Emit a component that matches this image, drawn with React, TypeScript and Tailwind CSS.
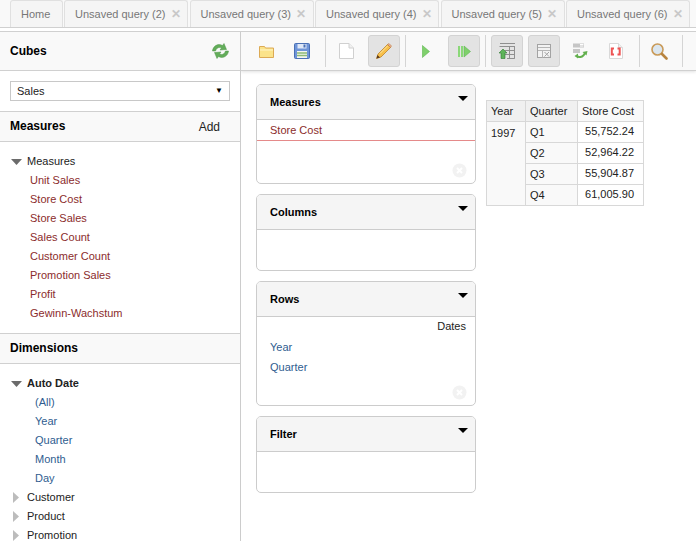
const font = "font-['Liberation_Sans',Arial,sans-serif]";

const tabs = ['Unsaved query (2)', 'Unsaved query (3)', 'Unsaved query (4)', 'Unsaved query (5)', 'Unsaved query (6)'];
const measures = ['Unit Sales', 'Store Cost', 'Store Sales', 'Sales Count', 'Customer Count', 'Promotion Sales', 'Profit', 'Gewinn-Wachstum'];
const levels = ['(All)', 'Year', 'Quarter', 'Month', 'Day'];
const cells = [['Q1', '55,752.24'], ['Q2', '52,964.22'], ['Q3', '55,904.87'], ['Q4', '61,005.90']];

function Open() {
  return (
    <svg width="11" height="6" viewBox="0 0 11 6" className="shrink-0">
      <path d="M0 0h11L5.500 6z" fill="#6b6b6b" />
    </svg>
  );
}

function Closed() {
  return (
    <svg width="6" height="11" viewBox="0 0 6 11" className="shrink-0">
      <path d="M0 0l6 5.500-6 5.500z" fill="#bcbcbc" />
    </svg>
  );
}

function Refresh() {
  return (
    <svg width="17" height="16" viewBox="0 0 17 16">
      <path d="M0.500 8C1 3 6 0 10.500 2.500L12 0.500 14.500 6.500 8 7 9.500 5C6.500 3.800 4.500 5 3.500 8z" fill="#63ad5a" stroke="#4f9447" strokeWidth="0.500" />
      <path d="M16.500 8C16 13 11 16 6.500 13.500L5 15.500 2.500 9.500 9 9 7.500 11C10.500 12.200 12.500 11 13.500 8z" fill="#63ad5a" stroke="#4f9447" strokeWidth="0.500" />
    </svg>
  );
}

function Folder() {
  return (
    <svg width="15" height="13" viewBox="0 0 15 13">
      <path d="M0.500 12.500V1.500h5l1 1.500h8v9.500z" fill="#fbe38a" stroke="#dcaa55" />
      <path d="M1 5h13" stroke="#fff6c8" />
    </svg>
  );
}

function Save() {
  return (
    <svg width="16" height="16" viewBox="0 0 16 16">
      <rect x="0.500" y="0.500" width="15" height="15" rx="1" fill="#6f95d8" stroke="#4a70b5" />
      <rect x="3.500" y="1" width="9" height="4.500" fill="#dfe8f7" />
      <rect x="9.500" y="1.500" width="2" height="3" fill="#4a70b5" />
      <rect x="3" y="8" width="10" height="7" fill="#f4f6f2" />
      <path d="M3 10h10M3 12.500h10" stroke="#8dbb75" strokeWidth="1.500" />
    </svg>
  );
}

function NewPage() {
  return (
    <svg width="15" height="16" viewBox="0 0 15 16">
      <path d="M0.500 0.500h9.500l4.500 4.500v10.500H0.500z" fill="#fff" stroke="#d0d0d0" />
      <path d="M10 0.500v4.500h4.500" fill="#f0f0f0" stroke="#d0d0d0" />
    </svg>
  );
}

function Pencil() {
  return (
    <svg width="16" height="16" viewBox="0 0 16 16">
      <path d="M0.500 15.500L2 11 11.500 1.500 14.500 4.500 5 14z" fill="#f8c04a" stroke="#b57a1f" strokeWidth="0.700" />
      <path d="M4 10.500l7.500-7.500" stroke="#fde7a3" />
      <path d="M11.500 1.500L13 0.500 15.500 3 14.500 4.500z" fill="#e9a9a0" stroke="#b57a1f" strokeWidth="0.500" />
      <path d="M0.500 15.500L1.500 12 4 14.500z" fill="#5b3a1a" />
    </svg>
  );
}

function Play() {
  return (
    <svg width="8" height="13" viewBox="0 0 8 13">
      <path d="M0.400 0.500L7.500 6.500 0.400 12.500z" fill="#7fd06c" stroke="#5fb552" strokeWidth="0.600" />
    </svg>
  );
}

function PlayAll() {
  return (
    <svg width="13" height="13" viewBox="0 0 13 13">
      <rect x="0" y="1" width="2" height="11" fill="#8ad878" />
      <rect x="3" y="1" width="2" height="11" fill="#8ad878" />
      <path d="M6 1L12.500 6.500 6 12z" fill="#7fd06c" stroke="#5fb552" strokeWidth="0.600" />
    </svg>
  );
}

function TableUp() {
  return (
    <svg width="16" height="16" viewBox="0 0 16 16">
      <path d="M1 0.500h15M0.500 3.500h15.500M6 7.500h9.500v8H8M6 11.500h9.500M10.500 3.500v12M15.500 3.500v12" fill="none" stroke="#8f8f8f" />
      <path d="M4 6L8 10H6V15.500H2V10H0z" fill="#5eb45a" stroke="#2f7a33" strokeWidth="0.600" />
    </svg>
  );
}

function TableX() {
  return (
    <svg width="14" height="14" viewBox="0 0 14 14">
      <rect x="0.500" y="0.500" width="13" height="13" fill="#f2f2f2" stroke="#a3a3a3" />
      <path d="M1 3.500h12M1 6.500h12M5.500 6.500v7" stroke="#b5b5b5" />
      <path d="M7.500 8l4.500 4.500M12 8l-4.500 4.500" stroke="#a3a3a3" />
    </svg>
  );
}

function TableSwap() {
  return (
    <svg width="15" height="16" viewBox="0 0 15 16">
      <rect x="0" y="0.500" width="11" height="4" fill="#c6c6c6" />
      <rect x="0" y="6" width="7" height="4" fill="#c6c6c6" />
      <path d="M7 1.500h3.500M7 3h3.500" stroke="#fff" />
      <path d="M4 12c0 3 6.500 3.200 8-2.500" fill="none" stroke="#63b04e" strokeWidth="2" />
      <path d="M9.500 9l5-1-1 4.500z" fill="#63b04e" />
      <path d="M1.500 13l3.500-2.500v5z" fill="#63b04e" />
    </svg>
  );
}

function Json() {
  return (
    <svg width="14" height="16" viewBox="0 0 14 16">
      <path d="M0.500 0.500h9l4 4v11h-13z" fill="#fff" stroke="#d9d9d9" />
      <path d="M9.500 0.500v4h4" fill="#f0f0f0" stroke="#d9d9d9" />
      <path d="M5 5.500H2.800v6H5M8.500 5.500h2.200v6H8.500" fill="none" stroke="#ee5555" strokeWidth="2" />
    </svg>
  );
}

function Search() {
  return (
    <svg width="17" height="17" viewBox="0 0 17 17">
      <circle cx="6.500" cy="6.500" r="5.500" fill="#dbe6ef" stroke="#c99a58" strokeWidth="1.600" />
      <path d="M11 11l4.500 4.500" stroke="#b8843f" strokeWidth="2.600" strokeLinecap="round" />
    </svg>
  );
}

function Tool({ active, children }: { active?: boolean; children: React.ReactNode }) {
  return (
    <div className={`w-8 h-8 shrink-0 flex items-center justify-center rounded-[3px] border ${active ? 'bg-[#e3e3e3] border-[#d3d3d3]' : 'border-transparent'}`}>
      {children}
    </div>
  );
}

function Sep({ left, right }: { left: string; right: string }) {
  return <div className={`w-px h-8 bg-[#d5d5d5] shrink-0 ${left} ${right}`} />;
}

function DropBox({ title, h, children }: { title: string; h: string; children?: React.ReactNode }) {
  return (
    <div className={`${h} relative shrink-0 rounded-[5px] border border-[#cccccc] bg-white overflow-hidden`}>
      <div className="h-[35px] bg-[#f5f5f5] border-b border-[#cccccc] pl-[13px] flex items-center text-[11px] font-bold text-black">
        {title}
      </div>
      <svg width="10" height="5" viewBox="0 0 10 5" className="absolute right-[7px] top-[11px]">
        <path d="M0 0h10L5 5z" fill="#000" />
      </svg>
      {children}
    </div>
  );
}

function ClearIcon() {
  return (
    <svg width="15" height="15" viewBox="0 0 15 15" className="absolute right-[8px] bottom-[5px]">
      <circle cx="7.500" cy="7.500" r="7" fill="#f2f2f2" />
      <path d="M5 5l5 5M10 5l-5 5" stroke="#fff" strokeWidth="2" />
    </svg>
  );
}

export default function App() {
  return (
    <div className={`${font} w-[696px] h-[541px] overflow-hidden bg-white text-[11px] text-[#222]`}>
      {/* tab strip */}
      <div className="h-[28px] bg-[#f9f9f9] border-b border-[#d0d0d0] pl-[10px] flex gap-[1.5px] overflow-hidden">
        <div className="w-[52.5px] h-[27px] shrink-0 bg-[#f5f5f5] border border-b-0 border-[#e0e0e0] rounded-t-[3px] pl-[10px] flex items-center text-[#777]">
          Home
        </div>
        {tabs.map((t) => (
          <div key={t} className="w-[124px] h-[27px] shrink-0 bg-[#f5f5f5] border border-b-0 border-[#e0e0e0] rounded-t-[3px] pl-[10px] flex items-center text-[#777]">
            <span>{t}</span>
            <span className="ml-[5px] text-[#c8c8c8] text-[12px] leading-none font-bold">✕</span>
          </div>
        ))}
      </div>

      <div className="h-[3px]" />

      <div className="flex h-[510px] border-t border-[#d0d0d0]">
        {/* left panel */}
        <div className="w-[241px] shrink-0 border-r border-[#cccccc] overflow-hidden">
          <div className="h-[39px] bg-[#f9f9f9] border-b border-[#d0d0d0] pl-[10px] pr-[11px] flex items-center justify-between">
            <span className="text-[12px] font-bold text-black">Cubes</span>
            <Refresh />
          </div>
          <div className="h-[41px] px-[10px] pt-[10px] border-b border-[#d0d0d0]">
            <div className="h-[20px] border border-[#c8c8c8] pl-[6px] pr-[6px] flex items-center justify-between text-[#222]">
              <span>Sales</span>
              <span className="text-[8px] text-black">▼</span>
            </div>
          </div>
          <div className="h-[30px] bg-[#f9f9f9] border-b border-[#d0d0d0] pl-[10px] pr-[20px] flex items-center justify-between">
            <span className="text-[12px] font-bold text-black pb-[2px]">Measures</span>
            <span className="text-[12px] text-[#222]">Add</span>
          </div>
          <div className="pt-[10px] pb-[10px] border-b border-[#d0d0d0]">
            <div className="h-[19px] pl-[11px] flex items-center gap-[5px]">
              <Open />
              <span>Measures</span>
            </div>
            {measures.map((m) => (
              <div key={m} className="h-[19px] pl-[30px] flex items-center text-[#8b2c2c]">{m}</div>
            ))}
          </div>
          <div className="h-[30px] bg-[#f9f9f9] border-b border-[#d0d0d0] pl-[10px] flex items-center">
            <span className="text-[12px] font-bold text-black pb-[2px]">Dimensions</span>
          </div>
          <div className="pt-[10px]">
            <div className="h-[19px] pl-[11px] flex items-center gap-[5px]">
              <Open />
              <span className="font-bold">Auto Date</span>
            </div>
            {levels.map((l) => (
              <div key={l} className="h-[19px] pl-[35px] flex items-center text-[#2f5d8f]">{l}</div>
            ))}
            {['Customer', 'Product', 'Promotion'].map((d) => (
              <div key={d} className="h-[19px] pl-[13px] flex items-center gap-[8px]">
                <Closed />
                <span>{d}</span>
              </div>
            ))}
          </div>
        </div>

        {/* workspace */}
        <div className="flex-1 min-w-0 overflow-hidden">
          <div className="h-[39px] bg-[#f9f9f9] border-b border-[#d0d0d0] shadow-[0_1px_3px_rgba(0,0,0,0.12)] pl-[9px] flex items-center overflow-hidden">
            <Tool><Folder /></Tool>
            <div className="w-[4px] shrink-0" />
            <Tool><Save /></Tool>
            <Sep left="ml-[7px]" right="mr-[4px]" />
            <Tool><NewPage /></Tool>
            <div className="w-[6px] shrink-0" />
            <Tool active><Pencil /></Tool>
            <Sep left="ml-[5px]" right="mr-[4px]" />
            <Tool><Play /></Tool>
            <div className="w-[6px] shrink-0" />
            <Tool active><PlayAll /></Tool>
            <Sep left="ml-[5px]" right="mr-[5px]" />
            <Tool active><TableUp /></Tool>
            <div className="w-[5px] shrink-0" />
            <Tool active><TableX /></Tool>
            <div className="w-[4px] shrink-0" />
            <Tool><TableSwap /></Tool>
            <div className="w-[4px] shrink-0" />
            <Tool><Json /></Tool>
            <Sep left="ml-[7px]" right="mr-[3px]" />
            <Tool><Search /></Tool>
            <Sep left="ml-[7px]" right="mr-[3px]" />
          </div>

          <div className="flex pt-[13px] pl-[15px]">
            <div className="w-[220px] shrink-0 flex flex-col gap-[10px]">
              <DropBox title="Measures" h="h-[100px]">
                <div className="h-[21px] pl-[13px] flex items-center border-b border-[#e58a8a] text-[#8b2c2c]">Store Cost</div>
                <ClearIcon />
              </DropBox>
              <DropBox title="Columns" h="h-[77px]" />
              <DropBox title="Rows" h="h-[125px]">
                <div className="h-[19px] pr-[9px] flex items-center justify-end text-[#222]">Dates</div>
                <div className="h-[20px] mt-[1px] pl-[13px] flex items-center text-[#2f5d8f]">Year</div>
                <div className="h-[20px] pl-[13px] flex items-center text-[#2f5d8f]">Quarter</div>
                <ClearIcon />
              </DropBox>
              <DropBox title="Filter" h="h-[77px]" />
            </div>

            <table className="ml-[10px] mt-[16px] h-fit border-collapse text-[11px] text-[#222] self-start">
              <thead>
                <tr className="h-[21px]">
                  <th className="w-[39px] bg-[#f0f0f0] border border-[#d8d8d8] pl-[4px] text-left font-normal">Year</th>
                  <th className="w-[52px] bg-[#f0f0f0] border border-[#d8d8d8] pl-[4px] text-left font-normal">Quarter</th>
                  <th className="w-[66px] bg-[#f9f9f9] border border-[#d8d8d8] pl-[4px] text-left font-normal">Store Cost</th>
                </tr>
              </thead>
              <tbody>
                {cells.map(([q, v], i) => (
                  <tr key={q} className="h-[21px]">
                    {i === 0 && <td rowSpan={4} className="bg-[#f9f9f9] border border-[#d8d8d8] pl-[4px] align-top pt-[3px]">1997</td>}
                    <td className="bg-[#f9f9f9] border border-[#d8d8d8] pl-[4px]">{q}</td>
                    <td className="border border-[#d8d8d8] pr-[9px] pb-[2px] text-right">{v}</td>
                  </tr>
                ))}
              </tbody>
            </table>
          </div>
        </div>
      </div>
    </div>
  );
}
